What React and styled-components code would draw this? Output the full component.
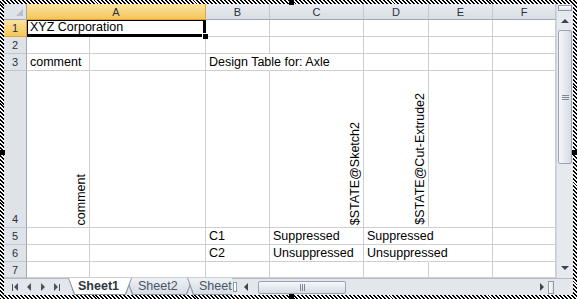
import styled, { createGlobalStyle } from "styled-components";

const GlobalStyle = createGlobalStyle`
  body {
    margin: 0;
    overflow: hidden;
    background: #fff;
  }
`;

const font = `"Liberation Sans", Arial, sans-serif`;
const grid = "#cfcfcf";

const Frame = styled.div`
  position: relative;
  width: 577px;
  height: 299px;
  box-sizing: border-box;
  padding: 4px;
  display: flex;
  flex-direction: column;
  background: repeating-linear-gradient(45deg, #000 0 1.4px, #fff 1.4px 2.8px);
`;

const Handle = styled.span`
  position: absolute;
  width: 5px;
  height: 5px;
  background: #000;
`;

const Body = styled.div`
  display: flex;
  height: 274px;
  background: #fff;
`;

const Sheet = styled.div`
  display: grid;
  grid-template-columns: 23px 63px 116px 64px 94px 65px 64px 63px;
  grid-template-rows: 16px 17px 17px 17px 157px 17px 17px 16px;
  width: 552px;
  font-family: ${font};
`;

const Corner = styled.div`
  position: relative;
  box-sizing: border-box;
  background: #dfe3e8;
  border-right: 1px solid #9ea8b5;
  border-bottom: 1px solid #9ea8b5;
  &::after {
    content: "";
    position: absolute;
    right: 3px;
    bottom: 3px;
    border-left: 7px solid transparent;
    border-bottom: 7px solid #b9c0ca;
  }
`;

const ColHead = styled.div`
  grid-column: span ${(p) => p.$span || 1};
  box-sizing: border-box;
  display: flex;
  align-items: center;
  justify-content: center;
  font-size: 11px;
  color: #27313d;
  background: ${(p) =>
    p.$active
      ? "linear-gradient(#fbe3a3, #f4c65a)"
      : "linear-gradient(#e7eaee, #dbdfe5)"};
  border-right: 1px solid ${(p) => (p.$active ? "#e3a83c" : "#c2c8d1")};
  border-bottom: 1px solid ${(p) => (p.$active ? "#e39b2a" : "#9ea8b5")};
`;

const RowHead = styled.div`
  box-sizing: border-box;
  display: flex;
  align-items: ${(p) => (p.$bottom ? "flex-end" : "center")};
  justify-content: center;
  padding-bottom: ${(p) => (p.$bottom ? "2px" : "0")};
  font-size: 11px;
  color: #27313d;
  background: ${(p) =>
    p.$active ? "linear-gradient(#fbe3a3, #f4c65a)" : "#dfe3e8"};
  border-right: 1px solid ${(p) => (p.$active ? "#e39b2a" : "#9ea8b5")};
  border-bottom: 1px solid ${(p) => (p.$active ? "#e3a83c" : "#c2c8d1")};
`;

const Cell = styled.div`
  grid-column: span ${(p) => p.$span || 1};
  box-sizing: border-box;
  display: flex;
  align-items: flex-end;
  justify-content: ${(p) => (p.$vertical ? "flex-end" : "flex-start")};
  padding: ${(p) => (p.$vertical ? "0 1px 2px 0" : "0 2px 1px 3px")};
  font-size: 12.5px;
  line-height: 14px;
  color: #000;
  white-space: nowrap;
  border-right: 1px solid ${(p) => (p.$open ? "transparent" : grid)};
  border-bottom: 1px solid ${grid};
  min-width: 0;
`;

const Selected = styled(Cell)`
  position: relative;
  border: 1px solid #000;
  border-right-width: 3px;
  border-bottom-width: 3px;
  padding-left: 2px;
  padding-bottom: 0;
  &::after {
    content: "";
    position: absolute;
    right: -5px;
    bottom: -5px;
    width: 5px;
    height: 5px;
    background: #000;
    border-left: 1px solid #fff;
    border-top: 1px solid #fff;
  }
`;

const Rotated = styled.span`
  writing-mode: vertical-rl;
  transform: rotate(180deg);
  line-height: 14px;
`;

const VScroll = styled.div`
  width: 17px;
  display: flex;
  flex-direction: column;
  background: #e6e9ee;
  border-left: 1px solid #cfd5dd;
  box-sizing: border-box;
`;

const SplitBox = styled.div`
  height: 6px;
  margin: 1px 1px 0;
  box-sizing: border-box;
  border: 1px solid #8f9aab;
  background: linear-gradient(#fdfdfe, #dfe4ea);
`;

const Arrow = styled.div`
  height: ${(p) => p.$h || 18}px;
  display: flex;
  align-items: center;
  justify-content: center;
  &::before {
    content: "";
    border-left: 4px solid transparent;
    border-right: 4px solid transparent;
    ${(p) =>
      p.$dir === "up"
        ? "border-bottom: 4px solid #3c4450;"
        : "border-top: 4px solid #3c4450;"}
  }
`;

const VThumb = styled.div`
  height: 134px;
  margin: 0 1px;
  box-sizing: border-box;
  border: 1px solid #9aa4b2;
  border-radius: 2px;
  background: linear-gradient(90deg, #f5f7fa, #e3e7ed 60%, #d5dbe3);
  display: flex;
  align-items: center;
  justify-content: center;
  &::after {
    content: "";
    width: 7px;
    height: 5px;
    background: repeating-linear-gradient(#7d8797 0 1px, transparent 1px 2px);
  }
`;

const Track = styled.div`
  flex: 1;
`;

const Bar = styled.div`
  height: 17px;
  display: flex;
  align-items: stretch;
  background: #e3e7ec;
  border-top: 1px solid #b4bcc7;
  box-sizing: border-box;
  font-family: ${font};
`;

const Nav = styled.div`
  width: 64px;
  display: flex;
  align-items: center;
  justify-content: space-around;
  padding: 0 3px;
  box-sizing: border-box;
`;

const NavBtn = styled.span`
  display: flex;
  align-items: center;
  gap: 1px;
  &::before {
    content: "";
    display: ${(p) => (p.$bar === "left" ? "block" : "none")};
    width: 1px;
    height: 7px;
    background: #4a525e;
  }
  & > i {
    display: block;
    border-top: 4px solid transparent;
    border-bottom: 4px solid transparent;
    ${(p) =>
      p.$dir === "left"
        ? "border-right: 4px solid #4a525e;"
        : "border-left: 4px solid #4a525e;"}
  }
  &::after {
    content: "";
    display: ${(p) => (p.$bar === "right" ? "block" : "none")};
    width: 1px;
    height: 7px;
    background: #4a525e;
  }
`;

const Tabs = styled.div`
  display: flex;
  width: 164px;
  overflow: hidden;
  margin-top: -1px;
`;

const TabEdge = styled.div`
  flex: none;
  width: ${(p) => p.$w}px;
  margin-left: ${(p) => (p.$first ? 0 : -6)}px;
  z-index: ${(p) => (p.$active ? 2 : 1)};
  background: #8d98a8;
  clip-path: polygon(0 0, 100% 0, calc(100% - 6px) 100%, 6px 100%);
  padding: 0 1px 1px;
  box-sizing: border-box;
`;

const TabFace = styled.div`
  height: 100%;
  display: flex;
  align-items: center;
  padding-left: ${(p) => p.$pad}px;
  font-size: 12.5px;
  font-weight: ${(p) => (p.$active ? 700 : 400)};
  color: ${(p) => (p.$active ? "#2e3540" : "#4a5566")};
  background: ${(p) =>
    p.$active ? "#fff" : "linear-gradient(#eef1f5, #d6dce4)"};
  clip-path: polygon(0 0, 100% 0, calc(100% - 6px) 100%, 6px 100%);
  white-space: nowrap;
`;

const TabSplit = styled.div`
  width: 6px;
  display: flex;
  align-items: center;
  justify-content: center;
  &::after {
    content: "";
    width: 4px;
    height: 10px;
    box-sizing: border-box;
    border: 1px solid #8d98a8;
    background: #fff;
  }
`;

const HScroll = styled.div`
  flex: 1;
  display: flex;
  align-items: center;
`;

const HArrow = styled.div`
  width: ${(p) => p.$w || 14}px;
  display: flex;
  justify-content: center;
  &::before {
    content: "";
    border-top: 4px solid transparent;
    border-bottom: 4px solid transparent;
    ${(p) =>
      p.$dir === "left"
        ? "border-right: 4px solid #3c4450;"
        : "border-left: 4px solid #3c4450;"}
  }
`;

const HThumb = styled.div`
  width: 88px;
  height: 13px;
  margin-left: 4px;
  box-sizing: border-box;
  border: 1px solid #9aa4b2;
  border-radius: 2px;
  background: linear-gradient(#f5f7fa, #e3e7ed 60%, #d5dbe3);
  display: flex;
  align-items: center;
  justify-content: center;
  &::after {
    content: "";
    width: 5px;
    height: 7px;
    background: repeating-linear-gradient(90deg, #7d8797 0 1px, transparent 1px 2px);
  }
`;

const HSplit = styled.div`
  width: 6px;
  height: 13px;
  margin-right: 2px;
  box-sizing: border-box;
  border: 1px solid #8f9aab;
  background: linear-gradient(90deg, #fdfdfe, #dfe4ea);
`;

const BarCorner = styled.div`
  width: 17px;
  background: #e3e7ec;
`;

const cols = ["B", "C", "D", "E", "F"];

const rows = [
  { n: 2, cells: ["", "", "", "", "", "", ""] },
  { n: 3, cells: ["comment", "", "Design Table for: Axle", "", "", "", ""], open: [2] },
  {
    n: 4,
    tall: true,
    cells: ["comment", "", "", "$STATE@Sketch2", "$STATE@Cut-Extrude2", "", ""],
  },
  { n: 5, cells: ["", "", "C1", "Suppressed", "Suppressed", "", ""], open: [4] },
  { n: 6, cells: ["", "", "C2", "Unsuppressed", "Unsuppressed", "", ""], open: [4] },
  { n: 7, cells: ["", "", "", "", "", "", ""] },
];

export default function App() {
  return (
    <>
      <GlobalStyle />
      <Frame>
        <Handle style={{ left: 289, top: 0 }} />
        <Handle style={{ left: 289, bottom: 0 }} />
        <Handle style={{ left: 0, top: 150 }} />
        <Handle style={{ right: 0, top: 150 }} />
        <Body>
          <Sheet>
            <Corner />
            <ColHead $span={2} $active>
              A
            </ColHead>
            {cols.map((c) => (
              <ColHead key={c}>{c}</ColHead>
            ))}

            <RowHead $active>1</RowHead>
            <Selected $span={2}>XYZ Corporation</Selected>
            {cols.map((c) => (
              <Cell key={c} />
            ))}

            {rows.map((r) => [
              <RowHead key={`h${r.n}`} $bottom={r.tall}>
                {r.n}
              </RowHead>,
              ...r.cells.map((t, i) => (
                <Cell
                  key={`${r.n}-${i}`}
                  $vertical={r.tall}
                  $open={r.open && r.open.includes(i)}
                >
                  {r.tall && t ? <Rotated>{t}</Rotated> : t}
                </Cell>
              )),
            ])}
          </Sheet>
          <VScroll>
            <SplitBox />
            <Arrow $dir="up" $h={19} />
            <VThumb />
            <Track />
            <Arrow $dir="down" $h={20} />
          </VScroll>
        </Body>
        <Bar>
          <Nav>
            <NavBtn $dir="left" $bar="left">
              <i />
            </NavBtn>
            <NavBtn $dir="left">
              <i />
            </NavBtn>
            <NavBtn $dir="right">
              <i />
            </NavBtn>
            <NavBtn $dir="right" $bar="right">
              <i />
            </NavBtn>
          </Nav>
          <Tabs>
            <TabEdge $w={64} $first $active>
              <TabFace $active $pad={9}>
                Sheet1
              </TabFace>
            </TabEdge>
            <TabEdge $w={67}>
              <TabFace $pad={11}>Sheet2</TabFace>
            </TabEdge>
            <TabEdge $w={60}>
              <TabFace $pad={11}>Sheet3</TabFace>
            </TabEdge>
          </Tabs>
          <TabSplit />
          <HScroll>
            <HArrow $dir="left" $w={16} />
            <HThumb />
            <Track />
            <HArrow $dir="right" $w={12} />
            <HSplit />
          </HScroll>
          <BarCorner />
        </Bar>
      </Frame>
    </>
  );
}
